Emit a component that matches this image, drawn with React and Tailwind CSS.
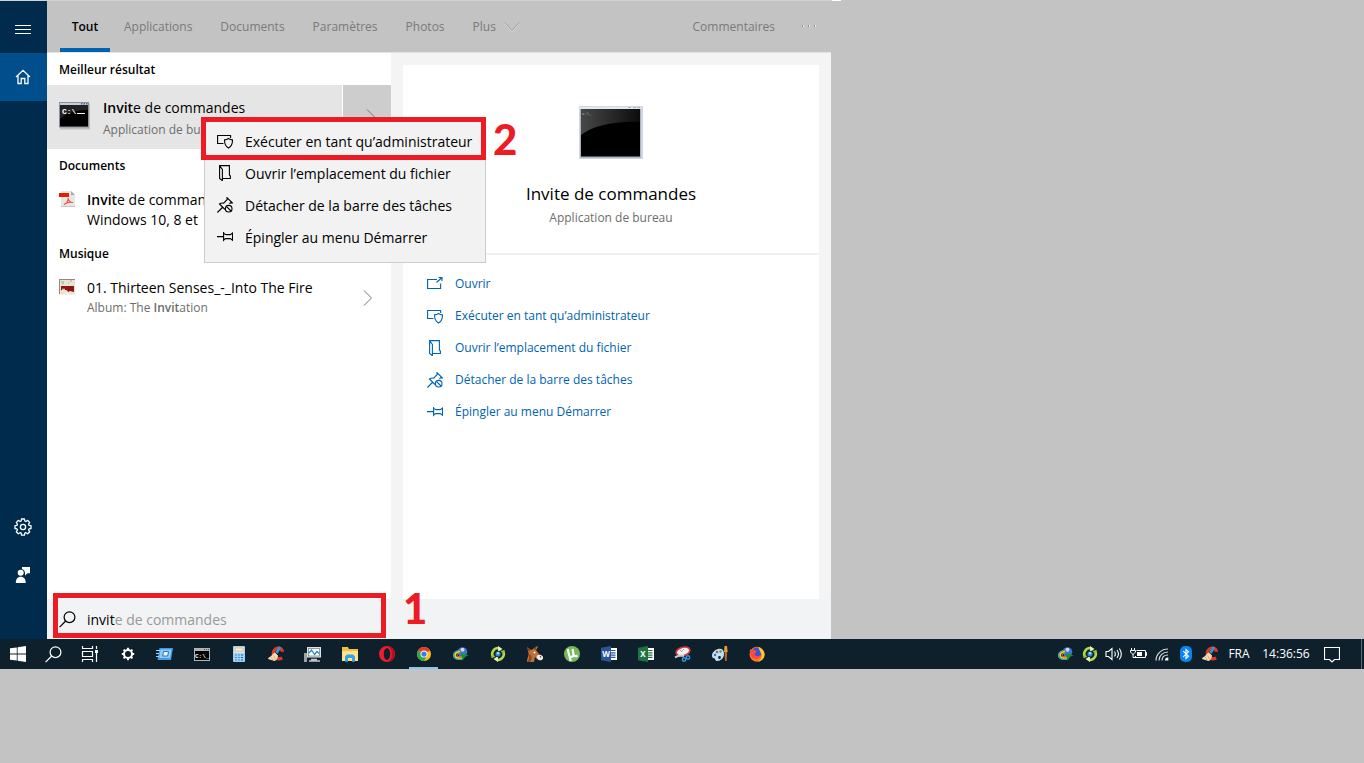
import { useState } from 'react';

const TABS = ['Applications', 'Documents', 'Paramètres', 'Photos'];

const embossed = 'text-[#7a7a7a] [text-shadow:1px_0_0_#ededed]';

/* ---------- line icons ---------- */

function Line({ children, size = 16, className = '' }) {
  return (
    <svg width={size} height={size} viewBox="0 0 16 16" fill="none" stroke="currentColor" strokeWidth="1.1" className={`shrink-0 ${className}`}>
      {children}
    </svg>
  );
}

const MenuIcon = () => (
  <svg width="16" height="10" viewBox="0 0 16 10" fill="currentColor">
    <path d="M0 0h16v1H0zM0 4h16v1H0zM0 8h16v1H0z" />
  </svg>
);

const OpenIcon = () => (
  <Line>
    <path d="M10 3.500H.6v9h13V7.500M9.500 6.500l5.500-5M11.500 1.500H15V5" />
  </Line>
);

const AdminIcon = () => (
  <Line>
    <path d="M6.500 10.500H.6v-8h13v2.500" />
    <path d="M11.500 5.500c1.200.9 2.500 1.300 4 1.400 0 4-.9 6.300-4 8.100-3.100-1.800-4-4.100-4-8.100 1.500-.1 2.800-.5 4-1.400z" />
  </Line>
);

const FolderIcon = () => (
  <Line>
    <path d="M5.500 13.500h7.900v-2.500l-1-1V.6H2.600v12.900l2.800 2.200V4.500L2.600.9" />
  </Line>
);

const UnpinIcon = () => (
  <Line>
    <path d="M.4 15.500l5-5M8 12.500L2.500 7c1.300-1 2.700-1.200 4.200-.9l3.500-3.600L10 .6 15.400 6l-2-.1-1 1.100" />
    <circle cx="11.700" cy="11.700" r="3.300" />
    <path d="M9.400 9.400l4.600 4.600" />
  </Line>
);

const PinIcon = () => (
  <Line>
    <path d="M0 7.600h6.500M6.600 3v9.200M6.600 4.300c1 .9 2 1.300 3 1.300h3.700L15.500 4v7.200l-2.200-1.600H9.600c-1 0-2 .4-3 1.300" />
  </Line>
);

const ChevronRight = () => (
  <svg width="10" height="16" viewBox="0 0 10 16" fill="none" stroke="#777" strokeWidth="1">
    <path d="M1 .5L8.500 8 1 15.500" />
  </svg>
);

const SearchIcon = () => (
  <svg width="17" height="17" viewBox="0 0 17 17" fill="none" stroke="currentColor" strokeWidth="1.200" className="shrink-0">
    <circle cx="10.500" cy="6.200" r="5.400" />
    <path d="M6.700 10L.6 16.200" />
  </svg>
);

const HomeIcon = () => (
  <Line>
    <path strokeWidth="1.300" d="M1 8l7-6.700L15 8M3 6.500v8h3.200v-5h3.600v5H13v-8" />
  </Line>
);

const GearIcon = () => (
  <svg width="18" height="18" viewBox="0 0 18 18" fill="none" stroke="currentColor" strokeWidth="1.300" strokeLinejoin="round">
    <path d="M7.500 1h3l.3 2 1.100.5 1.800-1.100 2 2-1.100 1.800.5 1.200 1.900.3v2.800l-1.900.3-.5 1.200 1.100 1.800-2 2-1.800-1.100-1.100.5-.3 1.900h-3l-.3-1.900-1.100-.5-1.800 1.100-2-2 1.100-1.800-.5-1.200-1.900-.3V7.700l1.900-.3.500-1.200-1.100-1.800 2-2 1.800 1.100L7.200 3z" />
    <circle cx="9" cy="9" r="2.600" />
  </svg>
);

const FeedbackIcon = () => (
  <svg width="16" height="18" viewBox="0 0 16 18" fill="currentColor">
    <path d="M7 1h8v6.200h-2.500L10 9.500V6.500A4 4 0 0 0 7 3z" />
    <circle cx="5.700" cy="6.700" r="3" />
    <path d="M.8 17c0-4 1.900-6.200 4.900-6.200s5 2.200 5 6.200z" />
  </svg>
);

/* ---------- result pictures ---------- */

const ConsoleSmall = () => (
  <svg width="32" height="30" viewBox="0 0 32 30" className="shrink-0">
    <rect x="1" y="1.500" width="30" height="26" fill="#bdbdbd" />
    <rect x="0" y="0" width="30" height="25.500" fill="#8d9298" />
    <rect x="1" y="1" width="28" height="2" fill="#c5d0dc" />
    <path d="M22 1h1.500v1.500H22zM24.500 1H26v1.500h-1.500zM27 1h1.500v1.500H27z" fill="#5c6878" />
    <rect x="1" y="3" width="28" height="21.500" fill="#000" />
    <path d="M1 3h28v5C16 8 6 12 1 17z" fill="#222" />
    <text x="3" y="12" fontFamily="Liberation Mono, monospace" fontSize="8" fontWeight="bold" fill="#fff">C:\</text>
    <path d="M18 11.500h8" stroke="#fff" />
  </svg>
);

const ConsoleLarge = () => (
  <svg width="64" height="54" viewBox="0 0 64 54">
    <rect x="0" y="0" width="64" height="53" rx="1" fill="#d3d8e0" />
    <rect x="1" y="1" width="61" height="51" fill="#aab4c4" />
    <rect x="1" y="1" width="61" height="2" fill="#e2e9ef" />
    <path d="M49 1.500h3M54 1.500h3M58 1.500h3" stroke="#a9b3bd" />
    <rect x="2" y="3" width="59" height="47.500" fill="#000" />
    <path d="M2 3h59v13C35 15 14 20 2 29z" fill="url(#gloss)" />
    <text x="3" y="9" fontFamily="Liberation Mono, monospace" fontSize="4" fill="#bbb">C:\_</text>
    <defs>
      <linearGradient id="gloss" x1="0" y1="0" x2="1" y2="0">
        <stop offset="0" stopColor="#484848" />
        <stop offset="1" stopColor="#0c0c0c" />
      </linearGradient>
    </defs>
  </svg>
);

const PdfIcon = () => (
  <svg width="16" height="16" viewBox="0 0 16 16" className="shrink-0">
    <path d="M2 0h10l4 4v12H2z" fill="#e6e6e6" />
    <path d="M12 0l4 4h-4z" fill="#aaa" />
    <path d="M2 15.500h14" stroke="#c4c4c4" />
    <rect x="0" y="2" width="10" height="4" fill="#ea1c00" />
    <path d="M5 13.500c2-.7 4-3.500 4.200-6.500.3 2.500 2 4.500 4.800 4.500-3-.6-6-.2-9 2z" fill="none" stroke="#f0523c" strokeWidth="1.100" />
  </svg>
);

const AlbumIcon = () => (
  <svg width="16" height="16" viewBox="0 0 16 16" className="shrink-0">
    <rect width="16" height="16" fill="#e9e3d0" />
    <path d="M0 .5h16M.5 0v16" stroke="#8b8b86" />
    <path d="M2 3h3M3 5l2-1M11 2h2M9 4h1" stroke="#a7a59a" />
    <path d="M2 7h13v6l-4-1-2 1-2-2-3 1-2-1z" fill="#8f1414" />
    <path d="M3 9l1 2 1-2 1 2 3 1-1 1-4-1-1 1z" fill="#f3e4da" />
    <path d="M0 15h6l2-2 3 2h5v1H0z" fill="#f4f1e8" />
  </svg>
);

/* ---------- taskbar pictures ---------- */

const WindowsLogo = () => (
  <svg width="16" height="16" viewBox="0 0 16 16" fill="#fff">
    <path d="M0 2.300l6.800-.9v6.200H0zM7.600 1.300L16 .1v7.500H7.600zM0 8.400h6.800v6.200L0 13.700zM7.600 8.400H16v7.500l-8.400-1.200z" />
  </svg>
);

const TaskView = () => (
  <svg width="20" height="16" viewBox="0 0 20 16" fill="none" stroke="#fff">
    <path d="M1.500 0v2.500h10V0M1.500 16v-2.500h10V16M1.500 5.500h10v5h-10zM15.500 0v3M15.500 7v9" strokeWidth="1.200" />
    <path d="M14 4h3v3h-3z" fill="#fff" stroke="none" />
  </svg>
);

const GearBold = () => (
  <svg width="14" height="14" viewBox="0 0 14 14" stroke="#fff" fill="none">
    <circle cx="7" cy="7" r="4" strokeWidth="2" />
    <path strokeWidth="2" d="M7 .8v2M7 11.200v2M.8 7h2M11.200 7h2M2.600 2.600L4 4M10 10l1.400 1.400M2.600 11.400L4 10M10 4l1.400-1.400" />
  </svg>
);

const RunIcon = () => (
  <svg width="17" height="12" viewBox="0 0 17 12">
    <path d="M3.500 0H17l-2 12H1.500z" fill="#3f9be6" />
    <path d="M4.500 1.500h11l-1.400 8.500H3.200z" fill="#8ccdf8" />
    <path d="M7.500 3.500h5l-.8 4.500h-5z" fill="#f2faff" stroke="#2670bd" />
    <path d="M0 2.500h4M0 5.500h3M0 8.500h3" stroke="#9fd6ff" />
  </svg>
);

const CmdIcon = () => (
  <svg width="16" height="13" viewBox="0 0 16 13">
    <rect width="16" height="13" fill="#aeb4b8" />
    <rect x="1" y="3" width="14" height="9" fill="#000" />
    <path d="M10 1.500h1M12 1.500h1M14 1.500h1" stroke="#555" />
    <text x="1" y="10" fontFamily="Liberation Mono, monospace" fontSize="6" fontWeight="bold" fill="#fff">C:\_</text>
  </svg>
);

const CalcIcon = () => (
  <svg width="12" height="16" viewBox="0 0 12 16">
    <rect width="12" height="16" rx="1" fill="#9fcff2" />
    <rect x="1" y="1" width="10" height="6" fill="#cfe8fa" />
    <rect x="2" y="2" width="8" height="3" fill="#fdf1d0" stroke="#e8a04a" strokeWidth=".6" />
    <path d="M2 9h2M5 9h2M2 11.500h2M5 11.500h2M2 14h2M5 14h2" stroke="#4a93d2" strokeWidth="1.200" />
    <path d="M8 9h2M8 11.500h2M8 14h2" stroke="#1f66b0" strokeWidth="1.200" />
  </svg>
);

const CCleaner = () => (
  <svg width="16" height="16" viewBox="0 0 16 16">
    <path d="M14.200 5.800C14.500 3 12 1.800 9.800 2.200 6.500 2.800 5 5.500 5.500 8.500c.5 3.500 4 5.500 8.700 3.500" fill="none" stroke="#de3826" strokeWidth="3.400" />
    <path d="M12 1L8.500 7" stroke="#3d8fcf" strokeWidth="2.800" />
    <path d="M7 6.500l3 3c0 2.500-1.500 5-3.500 5.500L0 13c.5-1.500 1-2 2.500-2.500C4 9.500 5 7 7 6.500z" fill="#f8dcb2" />
    <path d="M3 11l2 3M5.500 9.500L7.500 13" stroke="#c9955e" strokeWidth=".7" />
  </svg>
);

const MonitorIcon = () => (
  <svg width="17" height="15" viewBox="0 0 17 15">
    <rect x="3" y="0" width="14" height="10.500" fill="#dfe3e6" />
    <rect x="4.500" y="1.500" width="11" height="7.500" fill="#fff" stroke="#7a868e" strokeWidth=".8" />
    <path d="M5 6l2.500-3 3 4.500 2.500-3 2 2" stroke="#1e86bd" fill="none" strokeWidth="1.200" />
    <path d="M7 12.500h6M5 14h11" stroke="#c1c6ca" strokeWidth="1.500" />
    <rect x="0" y="6" width="3" height="9" fill="#9ba3a9" />
    <path d="M.5 8.500h2" stroke="#69d12d" />
  </svg>
);

const ExplorerIcon = () => (
  <svg width="16" height="15" viewBox="0 0 16 15">
    <path d="M0 0h6l1 2h9v12H0z" fill="#f0bd45" />
    <path d="M0 4h16v10H0z" fill="#fde38f" />
    <path d="M3 14.800V9.500L5 7.500h6l2 2v5.300h-3V11H6v3.800z" fill="#35a4e2" />
  </svg>
);

const OperaIcon = () => (
  <svg width="16" height="16" viewBox="0 0 16 16">
    <path fillRule="evenodd" d="M8 0a8 8 0 1 0 0 16A8 8 0 0 0 8 0zm0 2.200c2 0 3.200 2.500 3.200 5.800S10 13.800 8 13.800 4.800 11.300 4.800 8 6 2.200 8 2.200z" fill="#ee1c30" />
    <path d="M8 0a8 8 0 0 1 0 16c4-1.500 4.800-4.500 4.800-8S12 1.500 8 0z" fill="#b3101f" />
  </svg>
);

const ChromeIcon = () => (
  <svg width="14" height="14" viewBox="0 0 16 16">
    <circle cx="8" cy="8" r="8" fill="#fbc116" />
    <path d="M8 8L1.100 4A8 8 0 0 1 14.900 4z" fill="#e33b2e" />
    <path d="M8 8L1.100 4A8 8 0 0 0 8 16l3.500-6z" fill="#2da94f" />
    <circle cx="8" cy="8" r="4" fill="#fff" />
    <circle cx="8" cy="8" r="3" fill="#3b7ded" />
  </svg>
);

const IdmIcon = () => (
  <svg width="16" height="14" viewBox="0 0 16 14">
    <circle cx="9.500" cy="5" r="4.800" fill="#3f74c4" />
    <circle cx="9.500" cy="2.800" r="2" fill="#c9daf2" />
    <path d="M6.500 3.500C3 4 .5 6 .5 8.500c0 3 4 4.500 9 3.500" fill="none" stroke="#3da0b8" strokeWidth="1.400" />
    <path d="M7 4.500C4 5 2 6.500 2 8.500c0 2.200 3.500 3 7.500 2.300" fill="none" stroke="#f0dc2c" strokeWidth="1.600" />
    <path d="M7.500 6C5.500 6 4 7 4 8.300c0 1.200 2 1.600 5 1.200" fill="none" stroke="#e2662c" strokeWidth="1.100" />
    <path d="M8 6.500l7.800 2-3.300 1L9.500 13.500z" fill="#12962b" />
  </svg>
);

const SyncIcon = () => (
  <svg width="16" height="16" viewBox="0 0 16 16" fill="none">
    <path d="M3.200 11.300A6 6 0 0 1 8.500 2M12.800 4.700A6 6 0 0 1 7.500 14" stroke="#b2d94a" strokeWidth="2.600" />
    <path d="M8 0l4.500 3L8 6zM8 16l-4.500-3L8 10z" fill="#e6f2b8" />
    <path d="M1 12l2-4 2.500 3zM15 4l-2 4-2.500-3z" fill="#8bbf2c" />
    <circle cx="8" cy="8" r="3.200" fill="#1b2d3a" />
    <circle cx="8" cy="8" r="2.500" fill="#2b86cf" />
    <circle cx="8" cy="7.300" r="1.200" fill="#a6d8f4" />
  </svg>
);

const EmuleIcon = () => (
  <svg width="16" height="16" viewBox="0 0 16 16">
    <path d="M0 1l4 3 2-1L10 0l1 1-2 3 3 4 2 1c2 1 2 4 0 4.500l-4-.5-2-2-1 5H0c0-4 2-6 1.500-9z" fill="#bd7038" />
    <path d="M0 1l3 3-1 1.500zM10 0l-3 3 1 1z" fill="#6b3514" />
    <path d="M1.500 8C3 11 2 14 0 16h3c2-2 2-5 1-7z" fill="#8d4a1f" />
    <path d="M10 9.500c2-1 5.500-.5 6 1.500s-1 3.500-3.500 3.200S9 11 10 9.500z" fill="#ece9e6" />
    <circle cx="13.500" cy="10.800" r=".7" fill="#444" />
    <circle cx="7.500" cy="6.500" r="1" fill="#fff" />
  </svg>
);

const TorrentIcon = () => (
  <svg width="16" height="16" viewBox="0 0 16 16">
    <circle cx="8" cy="8" r="8" fill="#76b956" />
    <path d="M3.700 3l1.600 6.500c.7 2 3.700 1.800 4.200-.2L8.600 3M9.500 8.500c.6 2 2.500 2 4 1M5.500 10l1.200 5" stroke="#fff" strokeWidth="2.200" fill="none" />
  </svg>
);

function OfficeIcon({ letter, color }) {
  return (
    <svg width="16" height="16" viewBox="0 0 16 16">
      <rect x="8" y="2" width="8" height="12" fill="#fff" />
      <path d="M10 4.500h4.500M10 6.800h4.500M10 9.100h4.500M10 11.400h4.500" stroke={color} strokeWidth="1.200" />
      <path d="M0 1.800L10 0v16L0 14.200z" fill={color} />
      <text x="5" y="11" textAnchor="middle" fontFamily="Open Sans, sans-serif" fontSize="8" fontWeight="bold" fill="#fff">{letter}</text>
    </svg>
  );
}

const SnipIcon = () => (
  <svg width="17" height="16" viewBox="0 0 17 16" fill="none">
    <ellipse cx="9" cy="5.500" rx="7" ry="4.200" fill="#f4f1f1" stroke="#d8383c" strokeWidth="1.600" transform="rotate(-15 9 5.500)" />
    <path d="M7 6l3-3M6 4l2 2" stroke="#999" strokeWidth=".8" />
    <path d="M1 11.500c3-2 6-2.500 9-1.500" stroke="#c5ccd0" strokeWidth="2" />
    <circle cx="10" cy="13.500" r="1.700" stroke="#3596e6" strokeWidth="1.400" />
    <circle cx="14" cy="11.500" r="1.700" stroke="#3596e6" strokeWidth="1.400" />
  </svg>
);

const PaintIcon = () => (
  <svg width="16" height="16" viewBox="0 0 16 16">
    <path d="M6 3c4-1 6 1 6 5s-3 7-7 7c-2 0-1.500-2-2.500-2.500S0 12 0 9.500 2.500 4 6 3z" fill="#bfe0f3" />
    <circle cx="5" cy="6" r="1.300" fill="#e04b36" />
    <circle cx="8.500" cy="5.500" r="1.200" fill="#3aa655" />
    <circle cx="3" cy="9" r="1.200" fill="#2b6ed0" />
    <circle cx="7.500" cy="11.500" r="1.400" fill="#15242e" />
    <path d="M12.500 0h2.500l.7 6h-3.700z" fill="#e79a3a" />
    <path d="M12.500 6h2.700l-.5 9h-1.700z" fill="#b5642a" />
  </svg>
);

const FirefoxIcon = () => (
  <svg width="16" height="16" viewBox="0 0 16 16">
    <circle cx="8" cy="8.300" r="7.500" fill="#ff7a1a" />
    <circle cx="8" cy="6.500" r="5" fill="#3455d6" />
    <path d="M1 3c1 1 2 1 3 1.500 2-1 3 0 3.500 1.500L5.500 8c.5 2.500 4 3 6.500.5-.5 3.500-3 5-6 4.500S0 9 1 3z" fill="#ff4a3a" />
    <path d="M9.500 1c4.500 2 6.500 5 6 8.500S12 15.500 9 15.700c3-1.700 4-4 3.500-7S9.500 4 9.500 1z" fill="#ffc928" />
  </svg>
);

/* ---------- tray pictures ---------- */

const VolumeIcon = () => (
  <svg width="18" height="16" viewBox="0 0 18 16" fill="none" stroke="#fff" strokeWidth="1.100">
    <path d="M1 5.500h2.500L7 2.500v11l-3.500-3H1zM9.500 5.500c1 1.500 1 3.500 0 5M12 4c1.800 2.500 1.800 5.500 0 8M14.300 2.500c2.600 3.500 2.600 7.500 0 11" />
  </svg>
);

const BatteryIcon = () => (
  <svg width="17" height="12" viewBox="0 0 17 12" fill="none" stroke="#fff">
    <path d="M6.500 2.500h9v7h-10V8M15.500 4.500h1v3h-1" />
    <path d="M7 4h5v4H7z" fill="#fff" stroke="none" />
    <path d="M1.500 0v2M4.500 0v2M.5 2.500h5V4L3 6.500.5 4zM3 6v3.500h3" />
  </svg>
);

const WifiIcon = () => (
  <svg width="14" height="14" viewBox="0 0 14 14" fill="none" stroke="#d6dadd" strokeWidth="1.200">
    <path d="M1 13.500C1 7 6.500 2 13 2M4 13.500c0-5 4-8.500 9-8.500M7 13.500c0-3.500 2.500-5.500 6-5.500" />
    <path d="M10 13.500a3 3 0 0 1 3.300-3v3z" fill="#fff" stroke="none" />
  </svg>
);

const BluetoothIcon = () => (
  <svg width="12" height="16" viewBox="0 0 12 16">
    <rect width="12" height="16" rx="5" fill="#0a84f0" />
    <path d="M3.200 5.200l5.300 5L6 12.500v-9l2.500 2.300-5.300 5" stroke="#fff" fill="none" strokeWidth="1.100" />
  </svg>
);

const NotificationIcon = () => (
  <svg width="16" height="17" viewBox="0 0 16 17" fill="none" stroke="#fff" strokeWidth="1.200">
    <path d="M.5 1.500h15v12h-5L8 16l-2.500-2.500h-5z" />
  </svg>
);

/* ---------- data ---------- */

const ACTIONS = [
  { label: 'Exécuter en tant qu’administrateur', icon: AdminIcon },
  { label: 'Ouvrir l’emplacement du fichier', icon: FolderIcon },
  { label: 'Détacher de la barre des tâches', icon: UnpinIcon },
  { label: 'Épingler au menu Démarrer', icon: PinIcon },
];

const WordIcon = () => <OfficeIcon letter="W" color="#2a5699" />;
const ExcelIcon = () => <OfficeIcon letter="X" color="#1f7244" />;

const APPS = [
  { name: 'Rechercher', icon: SearchIcon },
  { name: 'Affichage des tâches', icon: TaskView },
  { name: 'Paramètres', icon: GearBold },
  { name: 'Exécuter', icon: RunIcon },
  { name: 'Invite de commandes', icon: CmdIcon },
  { name: 'Calculatrice', icon: CalcIcon },
  { name: 'CCleaner', icon: CCleaner },
  { name: 'Moniteur', icon: MonitorIcon },
  { name: 'Explorateur', icon: ExplorerIcon },
  { name: 'Opera', icon: OperaIcon },
  { name: 'Chrome', icon: ChromeIcon, active: true },
  { name: 'IDM', icon: IdmIcon },
  { name: 'Synchronisation', icon: SyncIcon },
  { name: 'eMule', icon: EmuleIcon },
  { name: 'uTorrent', icon: TorrentIcon },
  { name: 'Word', icon: WordIcon },
  { name: 'Excel', icon: ExcelIcon },
  { name: 'Outil Capture', icon: SnipIcon },
  { name: 'Paint', icon: PaintIcon },
  { name: 'Firefox', icon: FirefoxIcon },
];

const TRAY = [
  { name: 'IDM', icon: IdmIcon },
  { name: 'Synchronisation', icon: SyncIcon },
  { name: 'Volume', icon: VolumeIcon },
  { name: 'Batterie', icon: BatteryIcon },
  { name: 'Wi-Fi', icon: WifiIcon },
  { name: 'Bluetooth', icon: BluetoothIcon },
  { name: 'CCleaner', icon: CCleaner },
];

/* ---------- sections ---------- */

function Sidebar() {
  return (
    <nav className="flex w-[47px] shrink-0 flex-col bg-[#002b4d] pb-10 text-white">
      <button type="button" aria-label="Menu" className="flex h-[52px] items-center justify-center pr-px pt-1.5">
        <MenuIcon />
      </button>
      <button type="button" aria-label="Accueil" className="flex h-12 items-center justify-center bg-[#004e8c] pr-px">
        <HomeIcon />
      </button>
      <button type="button" aria-label="Paramètres" className="mt-auto flex h-12 items-center justify-center pr-px">
        <GearIcon />
      </button>
      <button type="button" aria-label="Commentaires" className="flex h-12 items-center justify-center pr-px">
        <FeedbackIcon />
      </button>
    </nav>
  );
}

function TopBar() {
  return (
    <header className="flex h-[52px] items-stretch border-b border-[#e4e4e4] pl-[13px] pr-3.5 text-[12px]">
      <button type="button" className="w-[50px] border-b-4 border-[#0063b1] pt-1 font-semibold text-black">Tout</button>
      <div className={`ml-[14px] flex items-center gap-7 ${embossed}`}>
        {TABS.map((tab) => (
          <button key={tab} type="button">{tab}</button>
        ))}
        <button type="button" className="flex items-center gap-2">
          Plus
          <svg width="16" height="10" viewBox="0 0 16 10" fill="none">
            <path d="M.5 1.500L8 9.500l7.500-8" stroke="#e6e6e6" />
            <path d="M.5.500L8 8.500l7.500-8" stroke="#999" />
          </svg>
        </button>
      </div>
      <div className={`ml-auto flex items-center gap-[26px] ${embossed}`}>
        <button type="button">Commentaires</button>
        <button type="button" aria-label="Autres options">
          <svg width="16" height="4" viewBox="0 0 16 4">
            <path d="M1 0h1v2H1zM7 0h1v2H7zM13 0h1v2h-1z" fill="#8a8a8a" />
            <path d="M2 0h1v2H2zM8 0h1v2H8zM14 0h1v2h-1z" fill="#eee" />
          </svg>
        </button>
      </div>
    </header>
  );
}

function GroupTitle({ children }) {
  return <h2 className="flex h-8 items-center px-3 pt-0.5 text-[12px] font-semibold text-black">{children}</h2>;
}

function Results() {
  return (
    <section className="w-[344px] shrink-0 bg-white text-[14px] text-black">
      <GroupTitle>Meilleur résultat</GroupTitle>
      <div className="flex h-16 gap-px">
        <a href="#best" className="flex flex-1 items-center gap-3 bg-[#e5e5e5] px-3">
          <ConsoleSmall />
          <span className="pt-0.5">
            <span className="block leading-6"><b className="font-semibold">Invit</b>e de commandes</span>
            <span className="block text-[12px] leading-5 text-[#6d6d6d]">Application de bureau</span>
          </span>
        </a>
        <button type="button" aria-label="Détails" className="flex w-12 items-center justify-center bg-[#cdcdcd] pl-2">
          <ChevronRight />
        </button>
      </div>
      <GroupTitle>Documents</GroupTitle>
      <a href="#document" className="flex items-start gap-3 px-3 pb-[7px] pt-[9px]">
        <span className="py-px"><PdfIcon /></span>
        <span>
          <span className="block leading-5"><b className="font-semibold">Invit</b>e de commandes</span>
          <span className="block leading-5">Windows 10, 8 et</span>
        </span>
      </a>
      <GroupTitle>Musique</GroupTitle>
      <a href="#music" className="flex items-start gap-3 px-3 pb-[7px] pt-[9px]">
        <span className="py-px"><AlbumIcon /></span>
        <span className="flex-1">
          <span className="block leading-5">01. Thirteen Senses_-_Into The Fire</span>
          <span className="block text-[12px] leading-5 text-[#6d6d6d]">Album: The <b className="font-semibold">Invit</b>ation</span>
        </span>
        <span className="self-center px-1.5"><ChevronRight /></span>
      </a>
    </section>
  );
}

function Details() {
  return (
    <section className="flex min-w-0 flex-1 flex-col bg-[#f4f4f4] px-3 pt-3">
      <div className="flex-1 bg-white">
        <div className="flex h-[190px] flex-col items-center border-b-2 border-[#f0f0f0] pt-[41px]">
          <ConsoleLarge />
          <h1 className="mt-5 text-[17px] leading-7 text-black">Invite de commandes</h1>
          <p className="text-[12px] leading-5 text-[#6d6d6d]">Application de bureau</p>
        </div>
        <ul className="px-6 pt-[13px] text-[12px] text-[#0063b1]">
          {[{ label: 'Ouvrir', icon: OpenIcon }, ...ACTIONS].map(({ label, icon: Icon }) => (
            <li key={label}>
              <a href="#action" className="flex h-8 items-center gap-3">
                <Icon />
                {label}
              </a>
            </li>
          ))}
        </ul>
      </div>
    </section>
  );
}

function SearchBox() {
  const [query, setQuery] = useState('invit');

  return (
    <label className="flex h-10 items-center bg-[#f2f3f5] pl-3 text-[14px] text-black">
      <SearchIcon />
      <input
        type="text"
        aria-label="Rechercher"
        value={query}
        onChange={(e) => setQuery(e.target.value)}
        className="ml-[11px] bg-transparent pt-0.5 leading-5 outline-none [field-sizing:content]"
      />
      {query === 'invit' && <span className="pt-0.5 leading-5 text-[#999]">e de commandes</span>}
    </label>
  );
}

function ContextMenu() {
  return (
    <div role="menu" className="absolute left-[204px] top-[117px] w-[282px] border border-[#ccc] bg-[#f2f2f2] pb-[9px] pt-[7px] text-[14px] text-black">
      {ACTIONS.map(({ label, icon: Icon }) => (
        <button key={label} role="menuitem" type="button" className="flex h-8 w-full items-center gap-3 whitespace-nowrap pl-3 text-left">
          <Icon />
          {label}
        </button>
      ))}
    </div>
  );
}

function Taskbar() {
  return (
    <footer className="flex h-[30px] items-stretch bg-[#0e202c] text-[12px] text-white">
      <button type="button" aria-label="Démarrer" className="flex w-[35px] items-center justify-center">
        <WindowsLogo />
      </button>
      {APPS.map(({ name, icon: Icon, active }) => (
        <button key={name} type="button" aria-label={name} className="relative flex w-[37px] items-center justify-center">
          <Icon />
          {active && <span className="absolute inset-x-1 bottom-0 h-0.5 bg-[#8cc5ee]" />}
        </button>
      ))}
      <div className="ml-auto flex items-stretch">
        {TRAY.map(({ name, icon: Icon }) => (
          <button key={name} type="button" aria-label={name} className="flex w-6 items-center justify-center">
            <Icon />
          </button>
        ))}
        <button type="button" className="w-[34px]">FRA</button>
        <button type="button" className="w-[60px]">14:36:56</button>
        <button type="button" aria-label="Notifications" className="mr-[13px] flex w-8 items-center justify-center">
          <NotificationIcon />
        </button>
        <span className="mr-0.5 w-px bg-[#5c6a73]" />
      </div>
    </footer>
  );
}

export default function App() {
  return (
    <div className="flex min-h-screen flex-col bg-[#c3c3c3] pb-[94px] font-['Open_Sans','Noto_Sans',sans-serif]">
      <div className="flex h-px">
        <span className="w-[832px] bg-[#d2d2d2]" />
        <span className="w-[9px] bg-white" />
      </div>
      <main className="flex w-full max-w-[831px] flex-1">
        <Sidebar />
        <div className="flex min-w-0 flex-1 flex-col">
          <TopBar />
          <div className="flex flex-1">
            <Results />
            <Details />
          </div>
          <div className="relative">
            <SearchBox />
            <div className="pointer-events-none absolute -top-1.5 bottom-px left-1.5 w-[333px] border-5 border-[#ed1c24]" />
            <span className="absolute -top-3 left-[356px] font-['Lato',sans-serif] text-[42px] font-black leading-[42px] text-[#ed1c24]">1</span>
          </div>
        </div>
      </main>
      <Taskbar />
      <ContextMenu />
      <div className="pointer-events-none absolute left-[201px] top-[117px] h-[43px] w-[285px] border-5 border-[#ed1c24]" />
      <span className="absolute left-[493px] top-[118px] font-['Lato',sans-serif] text-[42px] font-black leading-[42px] text-[#ed1c24]">2</span>
    </div>
  );
}
